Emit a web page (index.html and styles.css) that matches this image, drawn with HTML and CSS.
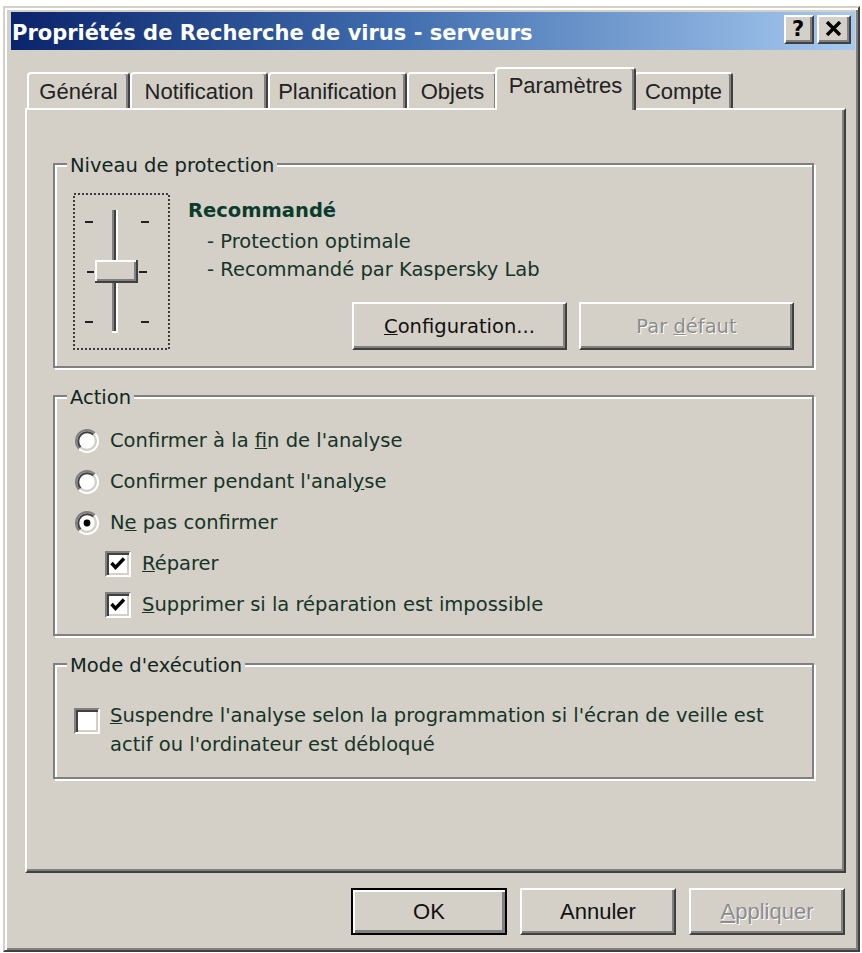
FILE: index.html
```html
<!DOCTYPE html>
<html lang="fr">
<head>
<meta charset="utf-8">
<title>Propriétés de Recherche de virus - serveurs</title>
<link rel="stylesheet" href="styles.css">
</head>
<body>
<div class="window">
  <div class="titlebar">
    <span class="title">Propriétés de Recherche de virus - serveurs</span>
    <div class="caption-btns">
      <span class="cap-btn help">?</span>
      <span class="cap-btn close"><svg width="17" height="15" viewBox="0 0 17 15"><path d="M2 1L15 14M15 1L2 14" stroke="#000" stroke-width="3.4" fill="none"/></svg></span>
    </div>
  </div>

  <div class="tabs">
    <div class="tab t-general">Général</div>
    <div class="tab t-notif">Notification</div>
    <div class="tab t-plan">Planification</div>
    <div class="tab t-obj">Objets</div>
    <div class="tab t-param active">Paramètres</div>
    <div class="tab t-compte">Compte</div>
  </div>

  <div class="panel">
    <div class="group g-level">
      <span class="group-label">Niveau de protection</span>
      <svg class="slider" width="97" height="157" viewBox="0 0 97 157">
        <rect x="1" y="1" width="95" height="155" fill="none" stroke="#3c3c3c" stroke-width="2" stroke-dasharray="2 2"/>
        <g fill="#222">
          <rect x="12" y="28" width="8" height="2"/>
          <rect x="68" y="28" width="8" height="2"/>
          <rect x="14" y="78" width="7" height="2"/>
          <rect x="66" y="78" width="8" height="2"/>
          <rect x="12" y="128" width="8" height="2"/>
          <rect x="68" y="128" width="8" height="2"/>
        </g>
        <rect x="39" y="17" width="2" height="123" fill="#808080"/>
        <rect x="41" y="17" width="2" height="121" fill="#404040"/>
        <rect x="43" y="17" width="2" height="123" fill="#fff"/>
        <rect x="39" y="138" width="6" height="2" fill="#fff"/>
        <rect x="22" y="67" width="43" height="23" fill="#404040"/>
        <rect x="22" y="67" width="41" height="21" fill="#fff"/>
        <rect x="24" y="69" width="39" height="19" fill="#808080"/>
        <rect x="24" y="69" width="37" height="17" fill="#d4d0c8"/>
      </svg>
      <div class="level-info">
        <div class="level-name">Recommandé</div>
        <div class="level-line">- Protection optimale</div>
        <div class="level-line">- Recommandé par Kaspersky Lab</div>
        <div class="level-btns">
          <div class="btn btn-wide"><span><u>C</u>onfiguration...</span></div>
          <div class="btn btn-wide disabled"><span>Par <u>d</u>éfaut</span></div>
        </div>
      </div>
    </div>

    <div class="group g-action">
      <span class="group-label">Action</span>
      <div class="opt">
        <svg class="radio" viewBox="0 0 24 24"><circle cx="12" cy="12" r="8" fill="#fff"/><path d="M4.22 19.78A11 11 0 0 1 19.78 4.22" fill="none" stroke="#808080" stroke-width="2"/><path d="M19.78 4.22A11 11 0 0 1 4.22 19.78" fill="none" stroke="#fff" stroke-width="2"/><path d="M5.64 18.36A9 9 0 0 1 18.36 5.64" fill="none" stroke="#404040" stroke-width="2"/><path d="M18.36 5.64A9 9 0 0 1 5.64 18.36" fill="none" stroke="#d4d0c8" stroke-width="2"/></svg>
        <span>Confirmer à la <u>f</u>in de l'analyse</span>
      </div>
      <div class="opt">
        <svg class="radio" viewBox="0 0 24 24"><circle cx="12" cy="12" r="8" fill="#fff"/><path d="M4.22 19.78A11 11 0 0 1 19.78 4.22" fill="none" stroke="#808080" stroke-width="2"/><path d="M19.78 4.22A11 11 0 0 1 4.22 19.78" fill="none" stroke="#fff" stroke-width="2"/><path d="M5.64 18.36A9 9 0 0 1 18.36 5.64" fill="none" stroke="#404040" stroke-width="2"/><path d="M18.36 5.64A9 9 0 0 1 5.64 18.36" fill="none" stroke="#d4d0c8" stroke-width="2"/></svg>
        <span>Confirmer pendant l'anal<u>y</u>se</span>
      </div>
      <div class="opt">
        <svg class="radio" viewBox="0 0 24 24"><circle cx="12" cy="12" r="8" fill="#fff"/><path d="M4.22 19.78A11 11 0 0 1 19.78 4.22" fill="none" stroke="#808080" stroke-width="2"/><path d="M19.78 4.22A11 11 0 0 1 4.22 19.78" fill="none" stroke="#fff" stroke-width="2"/><path d="M5.64 18.36A9 9 0 0 1 18.36 5.64" fill="none" stroke="#404040" stroke-width="2"/><path d="M18.36 5.64A9 9 0 0 1 5.64 18.36" fill="none" stroke="#d4d0c8" stroke-width="2"/><circle cx="12" cy="12" r="3.4" fill="#000"/></svg>
        <span>N<u>e</u> pas confirmer</span>
      </div>
      <div class="opt sub">
        <span class="cb"><svg viewBox="0 0 22 22"><polyline points="4.5,10 8.5,14.5 17,5.5" fill="none" stroke="#000" stroke-width="3.4"/></svg></span>
        <span><u>R</u>éparer</span>
      </div>
      <div class="opt sub">
        <span class="cb"><svg viewBox="0 0 22 22"><polyline points="4.5,10 8.5,14.5 17,5.5" fill="none" stroke="#000" stroke-width="3.4"/></svg></span>
        <span><u>S</u>upprimer si la réparation est impossible</span>
      </div>
    </div>

    <div class="group g-mode">
      <span class="group-label">Mode d'exécution</span>
      <span class="cb cb-mode"></span>
      <div class="mode-text">
        <div class="mode-line"><u>S</u>uspendre l'analyse selon la programmation si l'écran de veille est</div>
        <div class="mode-line">actif ou l'ordinateur est débloqué</div>
      </div>
    </div>
  </div>

  <div class="footer">
    <div class="btn btn-foot default"><span>OK</span></div>
    <div class="btn btn-foot"><span>Annuler</span></div>
    <div class="btn btn-foot disabled"><span><u>A</u>ppliquer</span></div>
  </div>
</div>
</body>
</html>
```

FILE: styles.css
```css
body {
  margin: 0;
  background: #fff;
  font-family: "DejaVu Sans", "Noto Sans", sans-serif;
  font-size: 19.5px;
  color: #163427;
}

.window {
  box-sizing: border-box;
  width: 857px;
  height: 946px;
  margin: 6px 0 0 3px;
  background: #d4d0c8;
  border: 2px solid;
  border-color: #d4d0c8 #404040 #404040 #d4d0c8;
  box-shadow: inset 2px 2px #fff, inset -2px -2px #808080;
  padding: 4px 3px 0 6px;
  display: flex;
  flex-direction: column;
}

/* title bar */
.titlebar {
  height: 38px;
  flex: none;
  display: flex;
  align-items: flex-start;
  justify-content: space-between;
  background: linear-gradient(to right, #0a246a 0%, #3f6cae 45%, #a6caf0 100%);
}
.title {
  color: #fff;
  font-weight: bold;
  font-size: 21px;
  line-height: 36px;
  padding: 3px 0 0 1px;
  white-space: nowrap;
}
.caption-btns {
  display: flex;
  gap: 3px;
  margin: 3px 4px 0 0;
}
.cap-btn {
  box-sizing: border-box;
  width: 30px;
  height: 29px;
  background: #d4d0c8;
  border: 2px solid;
  border-color: #fff #404040 #404040 #fff;
  box-shadow: inset -2px -2px #808080;
  display: flex;
  align-items: center;
  justify-content: center;
  color: #000;
}
.cap-btn.help {
  font-weight: bold;
  font-size: 21px;
  line-height: 1;
  padding-right: 2px;
}
.cap-btn.close {
  width: 34px;
  padding: 0 2px 2px 0;
}

/* tabs */
.tabs {
  display: flex;
  align-items: flex-end;
  height: 41px;
  flex: none;
  margin: 17px 0 0 16px;
  position: relative;
  z-index: 1;
}
.tab {
  box-sizing: border-box;
  height: 36px;
  border: 2px solid;
  border-bottom: 0;
  border-color: #fff #404040 #404040 #fff;
  border-radius: 4px 4px 0 0;
  box-shadow: inset -2px 0 #808080;
  font-family: "Liberation Sans", Arial, sans-serif;
  font-size: 22px;
  line-height: 24px;
  padding-top: 6px;
  text-align: center;
  color: #222;
  background: #d4d0c8;
  white-space: nowrap;
}
.t-general { width: 103px; }
.t-notif { width: 138px; }
.t-plan { width: 139px; }
.t-obj { width: 91px; }
.t-param { width: 136px; }
.t-compte { width: 99px; }
.tab.active {
  width: 141px;
  height: 43px;
  margin: 0 -2px -2px -3px;
  padding-top: 5px;
  position: relative;
  z-index: 2;
}

/* panel */
.panel {
  box-sizing: border-box;
  height: 765px;
  flex: none;
  margin: 0 9px 0 14px;
  border: 2px solid;
  border-color: #fff #404040 #404040 #fff;
  box-shadow: inset -2px -2px #808080;
  padding: 53px 0 0 26px;
}

.group {
  box-sizing: border-box;
  width: 761px;
  position: relative;
  border: 2px solid #808080;
  box-shadow: inset 2px 2px #fff, 2px 2px #fff;
}
.group-label {
  position: absolute;
  top: -11px;
  left: 12px;
  padding: 0 3px;
  background: #d4d0c8;
  line-height: 23px;
  color: #10261d;
  white-space: nowrap;
}

/* protection level */
.g-level {
  height: 205px;
  display: flex;
  align-items: flex-start;
  padding: 28px 0 0 18px;
}
.slider { flex: none; display: block; }
.level-info {
  flex: 1;
  margin-left: 18px;
  padding-top: 3px;
}
.level-name {
  font-weight: bold;
  line-height: 30px;
  margin-bottom: 2px;
  color: #0b3b2c;
}
.level-line {
  line-height: 28px;
  padding-left: 19px;
}
.level-btns {
  display: flex;
  justify-content: flex-end;
  gap: 12px;
  margin-top: 18px;
  padding-right: 18px;
}

/* buttons */
.btn {
  box-sizing: border-box;
  display: flex;
  align-items: center;
  justify-content: center;
  background: #d4d0c8;
  border: 2px solid;
  border-color: #fff #404040 #404040 #fff;
  box-shadow: inset -2px -2px #808080;
  color: #111;
  white-space: nowrap;
}
.btn-wide {
  width: 215px;
  height: 48px;
}
.btn.disabled {
  color: #8c8c8c;
  text-shadow: 1px 1px 0 #fff;
}
.btn-foot {
  width: 156px;
  height: 47px;
  font-family: "Liberation Sans", Arial, sans-serif;
  font-size: 22px;
}
.btn.default {
  border: 2px solid #000;
  box-shadow: inset 2px 2px #fff, inset -3px -3px #808080;
}

/* action */
.g-action {
  height: 241px;
  margin-top: 27px;
  padding: 23px 0 0 20px;
}
.opt {
  display: flex;
  align-items: center;
  height: 41px;
  white-space: nowrap;
}
.radio {
  flex: none;
  width: 24px;
  height: 24px;
  margin-right: 11px;
}
.opt.sub { padding-left: 30px; }

.cb {
  box-sizing: border-box;
  flex: none;
  width: 26px;
  height: 26px;
  margin-right: 11px;
  border: 2px solid;
  border-color: #808080 #fff #fff #808080;
  box-shadow: inset 2px 2px #404040, inset -2px -2px #d4d0c8;
  background: #fff;
}
.cb svg {
  display: block;
  width: 22px;
  height: 22px;
}

/* execution mode */
.g-mode {
  height: 116px;
  margin-top: 27px;
  padding: 36px 0 0 19px;
  display: flex;
  align-items: flex-start;
}
.cb-mode {
  margin: 7px 10px 0 0;
}
.mode-text {
  line-height: 29px;
}
.mode-line {
  white-space: nowrap;
}

/* footer */
.footer {
  display: flex;
  justify-content: flex-end;
  gap: 13px;
  margin: 15px 10px 0 0;
}
```
